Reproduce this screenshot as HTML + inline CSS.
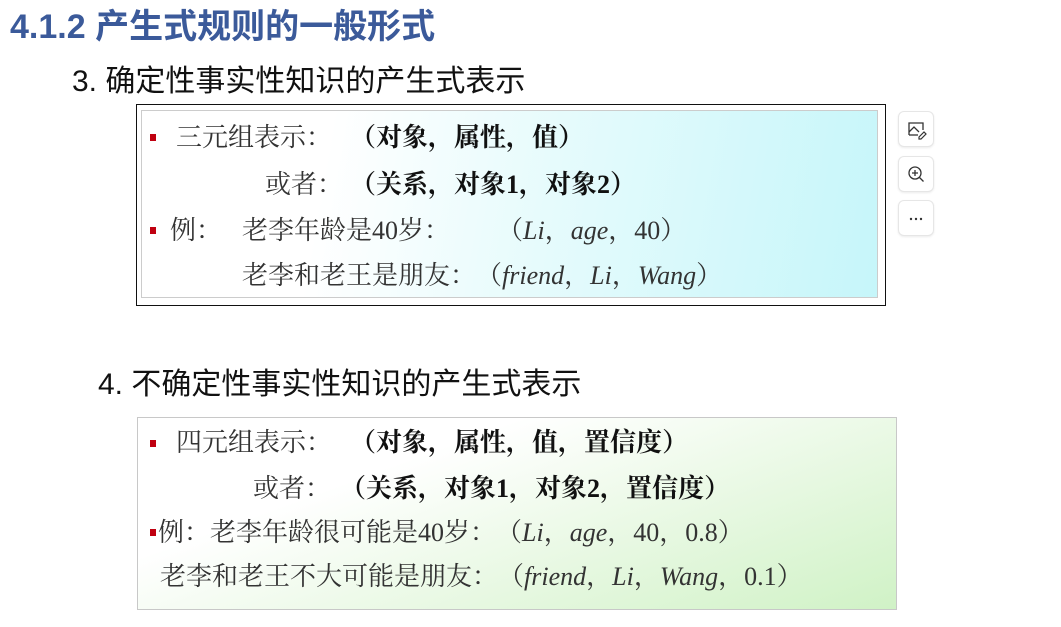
<!DOCTYPE html>
<html><head><meta charset="utf-8"><style>
body{margin:0;width:1061px;height:627px;background:#fff;position:relative;overflow:hidden;font-family:"Noto Serif CJK SC",serif;}
.a{position:absolute;white-space:nowrap;}
.t{font-family:"Liberation Sans","Noto Sans CJK SC",sans-serif;}
.s{font-size:26px;color:#333;line-height:30px;font-family:"Noto Serif CJK SC","Liberation Serif",serif;}
.b{font-weight:bold;color:#111;}
.bl{position:absolute;width:6px;height:7px;background:#c00010;}
.btn{position:absolute;left:898px;width:34px;height:34px;border:1px solid #e6e6e6;border-radius:6px;background:#fff;box-shadow:0 1px 2px rgba(0,0,0,.08);}
i,.l{font-family:"Liberation Serif",serif;}
i{font-style:italic}
.o,.c,.k{display:inline-block;width:1em;}
.o{text-align:right}.c{text-align:left}.k{text-align:center}
</style></head><body>
<div class="a t" style="left:10px;top:6px;font-size:34px;font-weight:bold;color:#3b5a9a;line-height:42px;">4.1.2 产生式规则的一般形式</div>
<div class="a t" style="left:72px;top:63px;font-size:30px;color:#111;line-height:38px;">3. 确定性事实性知识的产生式表示</div>

<div class="a" style="left:136px;top:104px;width:748px;height:200px;border:1px solid #111;background:#fff;"></div>
<div class="a" style="left:141px;top:110px;width:735px;height:186px;border:1px solid #ccc;background:linear-gradient(100deg,#ffffff 25%,#e6fbfc 55%,#c6f6fa 100%);"></div>
<div class="bl" style="left:150px;top:134px"></div>
<div class="a s" style="left:176px;top:121px">三元组表示<span class="k">：</span></div>
<div class="a s b" style="left:350px;top:121px"><span class="o">（</span>对象<span class="c">，</span>属性<span class="c">，</span>值<span class="c">）</span></div>
<div class="a s" style="left:265px;top:168px">或者<span class="k">：</span></div>
<div class="a s b" style="left:350px;top:168px"><span class="o">（</span>关系<span class="c">，</span>对象<span class="l">1</span><span class="c">，</span>对象<span class="l">2</span><span class="c">）</span></div>
<div class="bl" style="left:150px;top:227px"></div>
<div class="a s" style="left:170px;top:214px">例<span class="k">：</span></div>
<div class="a s" style="left:242px;top:214px">老李年龄是<span class="l">40</span>岁<span class="k">：</span></div>
<div class="a s" style="left:497px;top:214px"><span class="o">（</span><i>Li</i><span class="c">，</span><i>age</i><span class="c">，</span><span class="l">40</span><span class="c">）</span></div>
<div class="a s" style="left:242px;top:259px">老李和老王是朋友<span class="k">：</span><span class="o">（</span><i>friend</i><span class="c">，</span><i>Li</i><span class="c">，</span><i>Wang</i><span class="c">）</span></div>

<div class="btn" style="top:111px"><svg width="34" height="34" viewBox="0 0 34 34"><path d="M10 23V11h14v7" fill="none" stroke="#333" stroke-width="1.3"/><path d="M10 20l5-5 5 5" fill="none" stroke="#333" stroke-width="1.3"/><path d="M10 23h9" stroke="#333" stroke-width="1.3"/><path d="M20 25l5-5 2 2-5 5h-2z" fill="none" stroke="#333" stroke-width="1.2"/></svg></div>
<div class="btn" style="top:156px"><svg width="34" height="34" viewBox="0 0 34 34"><circle cx="16" cy="16" r="6" fill="none" stroke="#333" stroke-width="1.3"/><path d="M16 13v6M13 16h6M20.5 20.5l4 4" stroke="#333" stroke-width="1.3"/></svg></div>
<div class="btn" style="top:200px"><svg width="34" height="34" viewBox="0 0 34 34"><circle cx="12" cy="18" r="1.2" fill="#333"/><circle cx="17" cy="18" r="1.2" fill="#333"/><circle cx="22" cy="18" r="1.2" fill="#333"/></svg></div>

<div class="a t" style="left:98px;top:366px;font-size:30px;color:#111;line-height:38px;">4. 不确定性事实性知识的产生式表示</div>

<div class="a" style="left:137px;top:417px;width:758px;height:191px;border:1px solid #c8c8c8;background:linear-gradient(160deg,#ffffff 30%,#eefaea 55%,#d0f2c6 100%);"></div>
<div class="bl" style="left:150px;top:440px"></div>
<div class="a s" style="left:176px;top:426px">四元组表示<span class="k">：</span></div>
<div class="a s b" style="left:350px;top:426px"><span class="o">（</span>对象<span class="c">，</span>属性<span class="c">，</span>值<span class="c">，</span>置信度<span class="c">）</span></div>
<div class="a s" style="left:253px;top:472px">或者<span class="k">：</span></div>
<div class="a s b" style="left:340px;top:472px"><span class="o">（</span>关系<span class="c">，</span>对象<span class="l">1</span><span class="c">，</span>对象<span class="l">2</span><span class="c">，</span>置信度<span class="c">）</span></div>
<div class="bl" style="left:150px;top:529px"></div>
<div class="a s" style="left:158px;top:516px">例<span class="k">：</span>老李年龄很可能是<span class="l">40</span>岁<span class="k">：</span><span class="o">（</span><i>Li</i><span class="c">，</span><i>age</i><span class="c">，</span><span class="l">40</span><span class="c">，</span><span class="l">0.8</span><span class="c">）</span></div>
<div class="a s" style="left:160px;top:560px">老李和老王不大可能是朋友<span class="k">：</span><span class="o">（</span><i>friend</i><span class="c">，</span><i>Li</i><span class="c">，</span><i>Wang</i><span class="c">，</span><span class="l">0.1</span><span class="c">）</span></div>
</body></html>
